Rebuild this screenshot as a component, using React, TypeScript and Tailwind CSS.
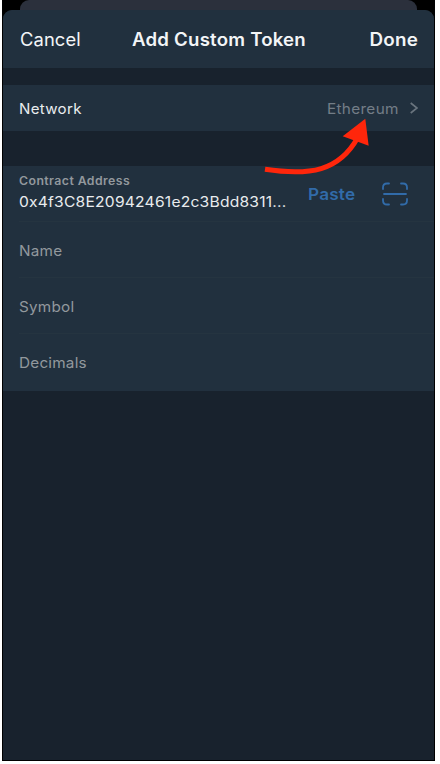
import React from "react";

function Field({ label, last = false }: { label: string; last?: boolean }) {
  return (
    <div className="pl-4">
      <div className={last ? "flex h-[57px] items-center pt-px" : "flex h-14 items-center border-b border-[#253440] pt-[3px]"}>
        <span className="origin-left scale-x-[1.055] text-[14.5px] leading-5 tracking-[0.2px] text-[#92989d]">{label}</span>
      </div>
    </div>
  );
}

function ScanIcon() {
  return (
    <svg width="26" height="24" viewBox="0 0 26 24" fill="none" stroke="#316ba9" strokeWidth="1.8" strokeLinecap="round">
      <path d="M1 7V5.5Q1 1.5 5 1.5H7M19 1.5H21Q25 1.5 25 5.5V7M25 17V18.5Q25 22.5 21 22.5H19M7 22.5H5Q1 22.5 1 18.5V17M2 12H24" />
    </svg>
  );
}

export default function App() {
  return (
    <div className="h-[764px] w-[440px] overflow-hidden bg-white pl-[2px] font-['Inter',sans-serif]">
      <div className="relative h-[761px] w-[433px] border-r border-b border-l border-black bg-black">
        <div className="mx-[17px] h-[10px] rounded-t-[9px] bg-[#2b303c]" />
        <div className="h-[750px] overflow-hidden rounded-t-[9px] bg-[#18222d]">
          <header className="grid h-[58px] grid-cols-[1fr_auto_1fr] items-center bg-[#21303e] pr-[16px] pl-[17px] text-[18px] text-[#f3f5f7]">
            <span className="origin-left scale-x-[1.02] tracking-[0.1px]">Cancel</span>
            <span className="scale-x-[1.035] font-semibold tracking-[0.2px]">Add Custom Token</span>
            <span className="origin-right scale-x-[1.045] text-right font-semibold tracking-[0.2px]">Done</span>
          </header>
          <div className="mt-[17px] flex h-[46px] items-center bg-[#21303e] pr-4 pl-4 text-[14.5px]">
            <span className="origin-left scale-x-[1.04] pt-px tracking-[0.3px] text-[#e9ecee]">Network</span>
            <span className="ml-auto origin-right scale-x-[1.06] pt-px tracking-[0.3px] text-[#737d87]">Ethereum</span>
            <svg className="ml-[11px]" width="8" height="12" viewBox="0 0 8 12" fill="none" stroke="#69747e" strokeWidth="1.6">
              <path d="M0.7 1L7 6L0.7 11" />
            </svg>
          </div>
          <div className="mt-[35px] h-[225px] bg-[#21303e]">
            <div className="pl-4">
              <div className="flex h-14 items-center border-b border-[#253440] pr-[26px]">
                <div className="flex w-[289px] flex-col items-start">
                  <span className="origin-left scale-x-[1.087] text-[11.3px] leading-[15px] font-semibold tracking-[0.4px] text-[#92989d]">Contract Address</span>
                  <span className="origin-left scale-x-[1.115] text-[14px] leading-[25px] tracking-[0.2px] whitespace-nowrap text-[#e9ecee]">0x4f3C8E20942461e2c3Bdd8311...</span>
                </div>
                <span className="origin-left scale-x-[1.04] pt-0.5 text-[16.5px] font-semibold tracking-[0.2px] text-[#316ba9]">Paste</span>
                <div className="ml-auto">
                  <ScanIcon />
                </div>
              </div>
            </div>
            <Field label="Name" />
            <Field label="Symbol" />
            <Field label="Decimals" last />
          </div>
        </div>
        <svg className="pointer-events-none absolute top-[115px] left-[257px]" width="120" height="65" viewBox="260 115 120 65">
          <path d="M265 169.3C310 176 339 171 357.5 138" fill="none" stroke="#ff260b" strokeWidth="5" />
          <path d="M365.3 118.7L342.7 136.3L368.7 145.7Z" fill="#ff260b" />
        </svg>
      </div>
    </div>
  );
}
